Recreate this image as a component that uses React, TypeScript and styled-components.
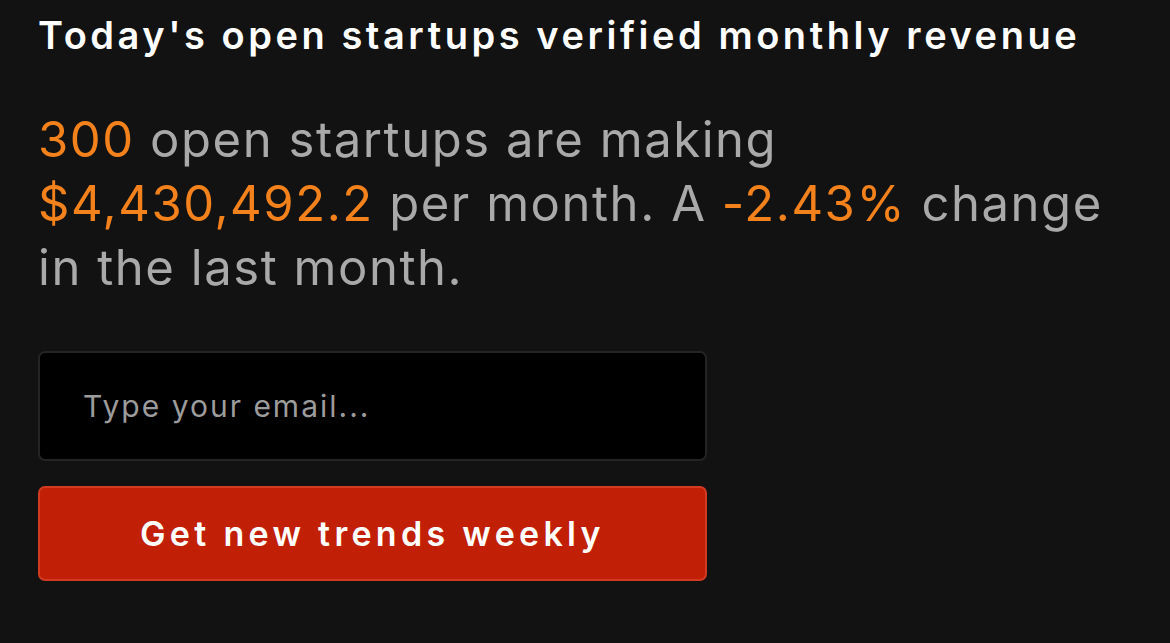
import React from 'react'
import styled, { createGlobalStyle } from 'styled-components'

const GlobalStyle = createGlobalStyle`
  html, body {
    margin: 0;
    padding: 0;
    background: #121212;
  }
  body {
    font-family: 'Inter', 'Noto Sans', sans-serif;
  }
`

const Page = styled.main`
  width: 1170px;
  height: 643px;
  box-sizing: border-box;
  padding: 11px 0 0 38px;
  background: #121212;
  display: flex;
  flex-direction: column;
`

const Title = styled.h1`
  margin: 0;
  font-size: 38px;
  line-height: 48px;
  font-weight: 600;
  letter-spacing: 3.55px;
  color: #ffffff;
  white-space: nowrap;
`

const Summary = styled.p`
  margin: 49px 0 0;
  width: 1075px;
  font-size: 49px;
  line-height: 64px;
  font-weight: 400;
  letter-spacing: 1.55px;
  color: #a9a9a9;
`

const Accent = styled.span`
  color: #f3811c;
`

const Form = styled.form`
  margin-top: 51px;
  width: 669px;
  display: flex;
  flex-direction: column;
  gap: 25px;
`

const EmailInput = styled.input`
  height: 110px;
  box-sizing: border-box;
  padding: 0 43px;
  background: #000000;
  border: 2px solid #242424;
  border-radius: 7px;
  color: #ffffff;
  font-family: inherit;
  font-size: 30px;
  letter-spacing: 2px;
  outline: none;

  &::placeholder {
    color: #9c9c9c;
  }
`

const SubmitButton = styled.button`
  height: 95px;
  background: #c11f06;
  border: 2px solid #d23a22;
  border-radius: 7px;
  color: #ffffff;
  font-family: inherit;
  font-size: 34px;
  font-weight: 600;
  letter-spacing: 4.3px;
  cursor: pointer;
`

export default function App() {
  return (
    <>
      <GlobalStyle />
      <Page>
        <Title>Today's open startups verified monthly revenue</Title>
        <Summary>
          <Accent>300</Accent> open startups are making <Accent>$4,430,492.2</Accent> per month. A{' '}
          <Accent>-2.43%</Accent> change in the last month.
        </Summary>
        <Form onSubmit={(e) => e.preventDefault()}>
          <EmailInput type="email" placeholder="Type your email..." />
          <SubmitButton type="submit">Get new trends weekly</SubmitButton>
        </Form>
      </Page>
    </>
  )
}
